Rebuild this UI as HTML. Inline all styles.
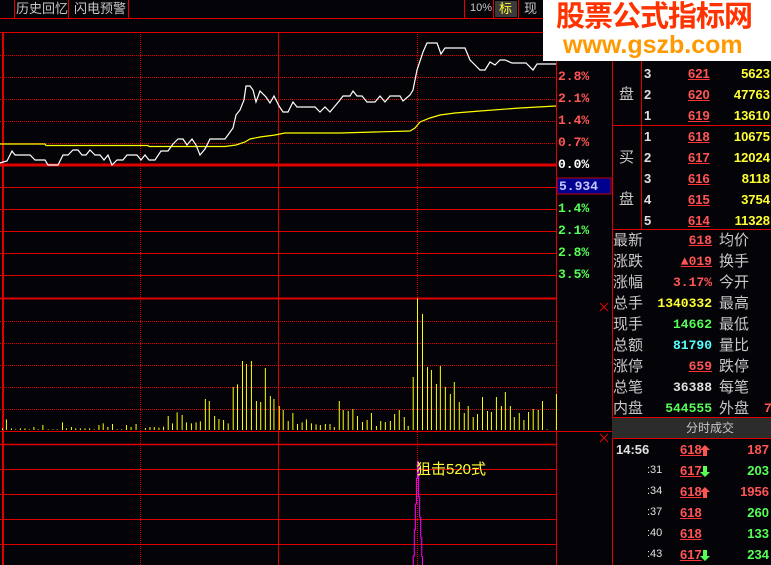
<!DOCTYPE html><html><head><meta charset="utf-8"><style>
body{margin:0;background:#040408;width:771px;height:565px;overflow:hidden;position:relative;font-family:"Liberation Sans","Noto Sans CJK SC",sans-serif}
.a{position:absolute;white-space:nowrap}
.cn{font-size:15px;color:#c8c8c8}
.n{font-size:13px;font-weight:bold;font-family:"Liberation Mono","Noto Sans CJK SC",monospace}
.r{color:#ff5555}.y{color:#ffff33}.g{color:#55ff55}.c{color:#55ffff}.w{color:#e0e0e0}
.u{text-decoration:underline;text-decoration-color:#ff3333}
</style></head><body>
<svg class="a" style="left:0;top:0" width="771" height="565">
<g stroke="#e00000" stroke-width="1" fill="none">
<line x1="0" y1="18.5" x2="543" y2="18.5"/>
<line x1="14.5" y1="0" x2="14.5" y2="18"/><line x1="68.5" y1="0" x2="68.5" y2="18"/><line x1="128.5" y1="0" x2="128.5" y2="18"/>
<line x1="464.5" y1="0" x2="464.5" y2="18"/><line x1="493.5" y1="0" x2="493.5" y2="18"/><line x1="518.5" y1="0" x2="518.5" y2="18"/>
<line x1="0" y1="32.5" x2="612" y2="32.5"/>
<g stroke-dasharray="1,1"><line x1="0" y1="55.5" x2="556" y2="55.5"/><line x1="0" y1="77.5" x2="556" y2="77.5"/><line x1="0" y1="99.5" x2="556" y2="99.5"/><line x1="0" y1="121.5" x2="556" y2="121.5"/><line x1="0" y1="143.5" x2="556" y2="143.5"/>
<line x1="0" y1="321.5" x2="556" y2="321.5"/><line x1="0" y1="343.5" x2="556" y2="343.5"/><line x1="0" y1="365.5" x2="556" y2="365.5"/><line x1="0" y1="387.5" x2="556" y2="387.5"/><line x1="0" y1="409.5" x2="556" y2="409.5"/>
<line x1="140.5" y1="32" x2="140.5" y2="565"/><line x1="417.5" y1="32" x2="417.5" y2="565"/></g>
<line x1="0" y1="165" x2="556" y2="165" stroke-width="3"/>
<line x1="0" y1="187.5" x2="556" y2="187.5"/><line x1="0" y1="209.5" x2="556" y2="209.5"/><line x1="0" y1="231.5" x2="556" y2="231.5"/><line x1="0" y1="253.5" x2="556" y2="253.5"/><line x1="0" y1="275.5" x2="556" y2="275.5"/>
<line x1="0" y1="298.5" x2="556" y2="298.5" stroke-width="2"/>
<line x1="0" y1="431.5" x2="612" y2="431.5"/>
<line x1="0" y1="444.5" x2="556" y2="444.5" stroke-width="1.5"/><line x1="0" y1="469.5" x2="556" y2="469.5"/><line x1="0" y1="494.5" x2="556" y2="494.5"/><line x1="0" y1="519.5" x2="556" y2="519.5"/><line x1="0" y1="544.5" x2="556" y2="544.5"/>
<line x1="3" y1="32" x2="3" y2="565" stroke-width="2"/>
<line x1="278.5" y1="32" x2="278.5" y2="565"/>
<line x1="556.5" y1="32" x2="556.5" y2="565"/>
<line x1="612.5" y1="60" x2="612.5" y2="565"/>
<line x1="641.5" y1="60" x2="641.5" y2="229"/>
<line x1="612" y1="125.5" x2="771" y2="125.5"/><line x1="612" y1="229.5" x2="771" y2="229.5"/>
<line x1="612" y1="417.5" x2="771" y2="417.5"/><line x1="612" y1="438.5" x2="771" y2="438.5"/>
<path d="M600 303l8 8M608 303l-8 8M600 434l8 8M608 434l-8 8"/>
</g>
<polyline fill="none" stroke="#ffff00" stroke-width="1.2" points="0,144 45,144 46,145.5 148,145.5 149,146.5 225,146.5 236,145 245,142 250,139 260,137 275,135 285,133 340,133 375,132 410,131 415,128 420,122 430,118 440,115 455,113 480,111 520,108 556,106"/>
<polyline fill="none" stroke="#ffffff" stroke-width="1.2" points="0,163 3,162 7,161 12,151 15,155 30,155 35,160 45,160 48,165 58,165 63,155 68,155 73,150 78,150 82,155 86,155 90,150 95,155 100,155 104,160 108,155 112,165 117,160 123,160 127,155 137,155 141,160 145,155 149,160 155,160 161,151 168,151 173,144 178,139 183,139 187,145 192,139 196,145 200,155 205,149 210,139 225,139 233,128 236,115 240,110 244,100 246,86 250,86 253,90 256,102 260,91 266,97 270,103 274,96 279,106 283,112 288,112 293,102 297,107 315,107 320,112 325,107 330,112 340,100 343,96 350,96 353,91 357,96 362,96 367,102 375,102 380,96 385,102 390,96 400,96 403,101 410,95 413,90 417,70 423,52 427,43 437,43 441,54 445,48 465,48 470,60 475,65 480,70 485,70 490,62 495,65 500,60 505,60 512,63 520,63 526,63 533,70 537,64 556,64"/>
<g transform="translate(0,280) scale(0.35714,0.33333)" stroke="#ffff00" stroke-width="2.8" fill="none">
<path d="M7 450V445M18 450V418M32 450V445M44 450V448M57 450V445M70 450V445M82 450V448M95 450V441M107 450V448M120 450V435M135 450V448M148 450V448M160 450V448M175 450V427M186 450V445M200 450V441M212 450V445M225 450V445M238 450V445M251 450V445M264 450V448M277 450V435M289 450V430M302 450V441M315 450V432M328 450V448M341 450V448M354 450V435M367 450V441M381 450V432M407 450V444M420 450V441M432 450V441M445 450V443M458 450V440M471 450V408M483 450V430M496 450V397M510 450V405M522 450V427M536 450V430M549 450V427M561 450V424M575 450V357M586 450V363M601 450V408M613 450V417M626 450V420M639 450V430M653 450V321M665 450V313M679 450V243M690 450V252M704 450V243M718 450V363M730 450V366M743 450V264M757 450V348M767 450V357M782 450V378M793 450V390M807 450V423M820 450V399M833 450V432M846 450V427M858 450V418M872 450V430M885 450V433M897 450V435M911 450V432M924 450V432M936 450V441M950 450V363M961 450V390M975 450V393M988 450V387M1001 450V408M1015 450V426M1028 450V420M1040 450V399M1054 450V438M1066 450V423M1079 450V426M1093 450V423M1105 450V402M1118 450V390M1132 450V411M1143 450V438M1157 450V291M1169 450V55M1183 450V102M1197 450V261M1208 450V270M1222 450V312M1233 450V258M1247 450V321M1261 450V342M1272 450V306M1286 450V366M1300 450V399M1311 450V378M1325 450V411M1337 450V402M1351 450V351M1365 450V393M1376 450V396M1390 450V351M1404 450V378M1415 450V336M1429 450V378M1440 450V411M1454 450V399M1467 450V420M1480 450V396M1493 450V387M1507 450V390M1519 450V363M1532 450V448M1558 450V342"/>
<polyline stroke="#ff00ff" points="1157,855 1157,828 1160,828 1160,750 1163,750 1163,672 1166,672 1166,595 1169,595 1169,545 1172,545 1172,650 1175,650 1175,712 1178,712 1178,773 1181,773 1181,830 1183,830 1183,855"/>
</g>
<rect x="557" y="178" width="54" height="16" fill="#000090" stroke="#c00000"/>
<rect x="495" y="1" width="22" height="16" fill="#3a3a3a"/>
<rect x="612" y="418" width="159" height="20" fill="#2c2c2c"/>
<rect x="543" y="0" width="228" height="61" fill="#ffffff"/>
<g fill="#ff5555"><path d="M705 445l5 5h-3v6h-4v-6h-3z"/><path d="M705 487l5 5h-3v6h-4v-6h-3z"/></g>
<g fill="#55ff55"><path d="M705 477l5-5h-3v-6h-4v6h-3z"/><path d="M705 561l5-5h-3v-6h-4v6h-3z"/></g>
</svg>
<div class="a cn" style="left:16px;top:0;font-size:13px;line-height:17px">历史回忆</div>
<div class="a cn" style="left:74px;top:0;font-size:13px;line-height:17px">闪电预警</div>
<div class="a cn" style="left:470px;top:0;font-size:11px;line-height:17px">10%</div>
<div class="a" style="left:499px;top:0;font-size:13px;line-height:17px;color:#ffff33">标</div>
<div class="a cn" style="left:524px;top:0;font-size:13px;line-height:17px">现</div>
<div class="a" style="left:556px;top:-1px;font-size:29px;font-weight:bold;color:#ff3300;letter-spacing:-1px;line-height:36px">股票公式指标网</div>
<div class="a" style="left:563px;top:31px;font-size:25px;font-weight:bold;color:#ff9900;line-height:28px">www.gszb.com</div>
<div class="a n r" style="left:558px;top:69px">2.8%</div>
<div class="a n r" style="left:558px;top:91px">2.1%</div>
<div class="a n r" style="left:558px;top:113px">1.4%</div>
<div class="a n r" style="left:558px;top:135px">0.7%</div>
<div class="a n" style="left:558px;top:157px;color:#fff">0.0%</div>
<div class="a n" style="left:559px;top:179px;color:#c8c8ff">5.934</div>
<div class="a n g" style="left:558px;top:201px">1.4%</div>
<div class="a n g" style="left:558px;top:223px">2.1%</div>
<div class="a n g" style="left:558px;top:245px">2.8%</div>
<div class="a n g" style="left:558px;top:267px">3.5%</div>
<div class="a" style="left:416px;top:458px;font-size:15px;color:#ffff33">狙击520式</div>
<div class="a cn" style="left:619px;top:83px">盘</div>
<div class="a cn" style="left:619px;top:146px">买</div>
<div class="a cn" style="left:619px;top:188px">盘</div>
<div style="position:absolute;left:644px;top:63px;width:126px;font-size:13px;font-weight:bold;line-height:21px">
<div style="position:relative;height:21px"><span class="w a" style="left:0">3</span><span class="r u a" style="left:44px">621</span><span class="y a" style="right:0">5623</span></div>
<div style="position:relative;height:21px"><span class="w a" style="left:0">2</span><span class="r u a" style="left:44px">620</span><span class="y a" style="right:0">47763</span></div>
<div style="position:relative;height:21px"><span class="w a" style="left:0">1</span><span class="r u a" style="left:44px">619</span><span class="y a" style="right:0">13610</span></div>
<div style="position:relative;height:21px"><span class="w a" style="left:0">1</span><span class="r u a" style="left:44px">618</span><span class="y a" style="right:0">10675</span></div>
<div style="position:relative;height:21px"><span class="w a" style="left:0">2</span><span class="r u a" style="left:44px">617</span><span class="y a" style="right:0">12024</span></div>
<div style="position:relative;height:21px"><span class="w a" style="left:0">3</span><span class="r u a" style="left:44px">616</span><span class="y a" style="right:0">8118</span></div>
<div style="position:relative;height:21px"><span class="w a" style="left:0">4</span><span class="r u a" style="left:44px">615</span><span class="y a" style="right:0">3754</span></div>
<div style="position:relative;height:21px"><span class="w a" style="left:0">5</span><span class="r u a" style="left:44px">614</span><span class="y a" style="right:0">11328</span></div>
</div>
<div style="position:absolute;left:613px;top:230px;width:158px;line-height:21px">
<div style="position:relative;height:21px"><span class="cn a">最新</span><span class="n r u a" style="right:59px">618</span><span class="cn a" style="left:106px">均价</span></div>
<div style="position:relative;height:21px"><span class="cn a">涨跌</span><span class="n r u a" style="right:59px">▲019</span><span class="cn a" style="left:106px">换手</span></div>
<div style="position:relative;height:21px"><span class="cn a">涨幅</span><span class="n r a" style="right:59px">3.17%</span><span class="cn a" style="left:106px">今开</span></div>
<div style="position:relative;height:21px"><span class="cn a">总手</span><span class="n y a" style="right:59px">1340332</span><span class="cn a" style="left:106px">最高</span></div>
<div style="position:relative;height:21px"><span class="cn a">现手</span><span class="n g a" style="right:59px">14662</span><span class="cn a" style="left:106px">最低</span></div>
<div style="position:relative;height:21px"><span class="cn a">总额</span><span class="n c a" style="right:59px">81790</span><span class="cn a" style="left:106px">量比</span></div>
<div style="position:relative;height:21px"><span class="cn a">涨停</span><span class="n r u a" style="right:59px">659</span><span class="cn a" style="left:106px">跌停</span></div>
<div style="position:relative;height:21px"><span class="cn a">总笔</span><span class="n w a" style="right:59px">36388</span><span class="cn a" style="left:106px">每笔</span></div>
<div style="position:relative;height:21px"><span class="cn a">内盘</span><span class="n g a" style="right:59px">544555</span><span class="cn a" style="left:106px">外盘</span><span class="n r a" style="left:151px">7</span></div>
</div>
<div class="a cn" style="left:686px;top:419px;font-size:12px;line-height:18px">分时成交</div>
<div style="position:absolute;left:613px;top:439px;width:156px;line-height:21px;font-size:13px;font-weight:bold">
<div style="position:relative;height:21px"><span class="w a" style="left:3px">14:56</span><span class="r u a" style="left:67px">618</span><span class="r a" style="right:0">187</span></div>
<div style="position:relative;height:21px"><span class="w a" style="left:34px;font-weight:normal;font-size:11px">:31</span><span class="r u a" style="left:67px">617</span><span class="g a" style="right:0">203</span></div>
<div style="position:relative;height:21px"><span class="w a" style="left:34px;font-weight:normal;font-size:11px">:34</span><span class="r u a" style="left:67px">618</span><span class="r a" style="right:0">1956</span></div>
<div style="position:relative;height:21px"><span class="w a" style="left:34px;font-weight:normal;font-size:11px">:37</span><span class="r u a" style="left:67px">618</span><span class="g a" style="right:0">260</span></div>
<div style="position:relative;height:21px"><span class="w a" style="left:34px;font-weight:normal;font-size:11px">:40</span><span class="r u a" style="left:67px">618</span><span class="g a" style="right:0">133</span></div>
<div style="position:relative;height:21px"><span class="w a" style="left:34px;font-weight:normal;font-size:11px">:43</span><span class="r u a" style="left:67px">617</span><span class="g a" style="right:0">234</span></div>
</div>
</body></html>
